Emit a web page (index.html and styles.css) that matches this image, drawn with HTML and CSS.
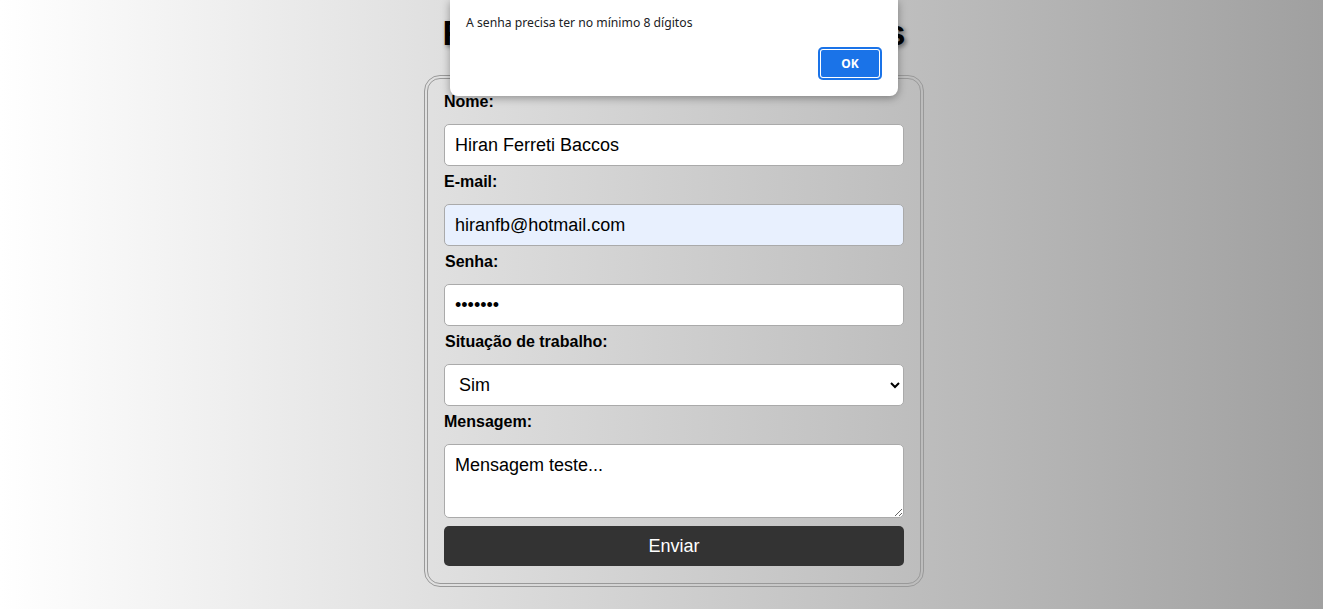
FILE: index.html
```html
<!DOCTYPE html>
<html lang="pt-BR">
<head>
<meta charset="utf-8">
<title>Formulário</title>
<link rel="stylesheet" href="styles.css">
</head>
<body>
<main class="page">
  <h1 class="title">Formulário de Funcionários</h1>
  <form class="form-box">
    <label class="field-label" for="nome">Nome:</label>
    <input class="field" id="nome" type="text" value="Hiran Ferreti Baccos">
    <label class="field-label" for="email">E-mail:</label>
    <input class="field field-autofill" id="email" type="email" value="hiranfb@hotmail.com">
    <label class="field-label field-label-shift" for="senha">Senha:</label>
    <input class="field" id="senha" type="password" value="1234567">
    <label class="field-label field-label-shift" for="situacao">Situação de trabalho:</label>
    <select class="field field-select" id="situacao">
      <option>Sim</option>
      <option>Não</option>
    </select>
    <label class="field-label" for="msg">Mensagem:</label>
    <textarea class="field field-area" id="msg">Mensagem teste...</textarea>
    <button class="submit" type="button">Enviar</button>
  </form>
</main>
<div class="alert">
  <p class="alert-text">A senha precisa ter no mínimo 8 dígitos</p>
  <div class="alert-actions">
    <button class="alert-ok" type="button">OK</button>
  </div>
</div>
</body>
</html>
```
FILE: styles.css
```css
html, body {
  margin: 0;
  height: 100%;
}
body {
  background: linear-gradient(to right, #ffffff, #a0a0a0);
  font-family: "Liberation Sans", Arial, sans-serif;
  color: #000;
  overflow: hidden;
}
.page {
  display: flex;
  flex-direction: column;
  align-items: center;
  padding-left: 25px;
}
.title {
  width: 500px;
  text-align: center;
  font-size: 35px;
  line-height: 40px;
  font-weight: bold;
  margin: 13px 0 22px;
  white-space: nowrap;
  text-shadow: 2px 2px 4px rgba(0, 0, 0, 0.45);
}
.form-box {
  width: 500px;
  box-sizing: border-box;
  border: 4px double #999;
  border-radius: 16px;
  padding: 14px 16px 17px;
  display: flex;
  flex-direction: column;
}
.field-label {
  display: block;
  font-weight: bold;
  font-size: 16px;
  line-height: 18px;
  margin-bottom: 13px;
}
.field-label-shift {
  padding-left: 1px;
}
.field {
  display: block;
  box-sizing: border-box;
  width: 460px;
  height: 42px;
  margin: 0 0 7px;
  padding: 0 10px;
  border: 1px solid #aaa;
  border-radius: 5px;
  background: #fff;
  font-family: "Liberation Sans", Arial, sans-serif;
  font-size: 18px;
  color: #000;
  outline: none;
}
.field-autofill {
  background: #e8f0fe;
}
.field-select {
  height: 42px;
  padding-left: 10px;
}
.field-area {
  height: 74px;
  padding: 10px;
  resize: vertical;
  margin-bottom: 8px;
  line-height: 21px;
}
.submit {
  display: block;
  width: 460px;
  height: 40px;
  border: none;
  border-radius: 5px;
  background: #333;
  color: #fff;
  font-family: "Liberation Sans", Arial, sans-serif;
  font-size: 18px;
}
.alert {
  position: absolute;
  top: 0;
  left: 450px;
  width: 448px;
  height: 96px;
  box-sizing: border-box;
  background: #fff;
  border-radius: 0 0 8px 8px;
  box-shadow: 0 2px 8px rgba(0, 0, 0, 0.35);
  padding: 15px 16px 0;
  font-family: "Noto Sans", "Open Sans", sans-serif;
}
.alert-text {
  margin: 0;
  font-size: 12.2px;
  line-height: 16px;
  color: #202124;
}
.alert-actions {
  display: flex;
  justify-content: flex-end;
  margin-top: 16px;
}
.alert-ok {
  width: 64px;
  height: 33px;
  border: none;
  border-radius: 5px;
  background: #1a73e8;
  box-shadow: inset 0 0 0 2px #1a73e8, inset 0 0 0 3px #fff;
  color: #fff;
  font-family: "Noto Sans", "Open Sans", sans-serif;
  font-weight: bold;
  font-size: 12px;
}
```
